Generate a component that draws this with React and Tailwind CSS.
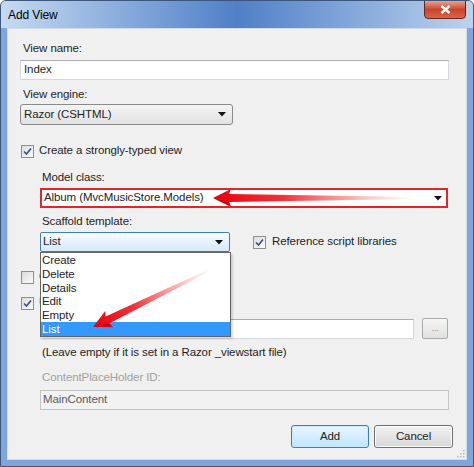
import React from "react";

const Check = ({ checked }) => (
  <span className="w-[13px] h-[13px] border border-[#8f8f8f] bg-gradient-to-br from-[#dcdcdc] to-[#fbfbfb] flex items-center justify-center shrink-0">
    {checked && (
      <svg width="9" height="9" viewBox="0 0 9 9">
        <path d="M1 4.5 L3.5 7 L8 1.5" fill="none" stroke="#3b4f83" strokeWidth="1.6" />
      </svg>
    )}
  </span>
);

const Caret = () => (
  <svg width="8" height="5" viewBox="0 0 8 5" className="shrink-0">
    <path d="M0 0 L8 0 L4 4.5 Z" fill="#111" />
  </svg>
);

const Arrow = ({ length, transform, id }) => (
  <g transform={transform}>
    <defs>
      <linearGradient id={id} x1="0" y1="0" x2="1" y2="0">
        <stop offset="0" stopColor="#e8000e" />
        <stop offset="0.35" stopColor="#ee1b24" stopOpacity="0.9" />
        <stop offset="1" stopColor="#ff5a5a" stopOpacity="0" />
      </linearGradient>
    </defs>
    <path
      d={`M0 0 L18 -9 L16 -4 L${length} -1 L${length} 1 L16 4 L18 9 Z`}
      fill={`url(#${id})`}
    />
    <path d="M2 1 L18 8 L16 4 Z" fill="#a10008" opacity="0.5" />
  </g>
);

export default function App() {
  const items = ["Create", "Delete", "Details", "Edit", "Empty", "List"];

  return (
    <div className="relative w-[474px] h-[467px] flex flex-col bg-[#7fa6dc] border border-[#3d5679] rounded-t-[6px] overflow-hidden text-[11.5px] tracking-[-0.1px] text-[#1e1e1e] font-['Liberation_Sans',Arial,sans-serif]">
      {/* title bar */}
      <div className="h-[27px] flex items-center pl-[7px] bg-linear-to-r from-[#c6daf2] via-[#4f80c6] to-[#bcd2ee]">
        <span className="text-[12px] text-black">Add View</span>
      </div>
      <div className="absolute top-[-1px] right-[7px] w-[42px] h-[19px] rounded-b-[4px] border border-[#6e2418] bg-gradient-to-b from-[#e9a08e] via-[#c8442a] to-[#d6654c] flex items-center justify-center">
        <svg width="11" height="9" viewBox="0 0 11 9">
          <path d="M1.5 1 L9.5 8 M9.5 1 L1.5 8" stroke="#fff" strokeWidth="2.4" />
        </svg>
      </div>

      {/* client area */}
      <div className="relative flex-1 mx-[6px] mb-[6px] bg-[#f0f0f0] border border-[#d2dcea] flex flex-col pl-[12px] pr-[17px] pt-[11px]">
        <div className="h-[16px] leading-[16px] pl-[3px]">View name:</div>
        <div className="mt-[4px] h-[20px] border border-[#d5d7dc] border-t-[#abadb3] bg-white flex items-center pl-[3px]">
          Index
        </div>
        <div className="mt-[6px] h-[16px] leading-[16px] pl-[3px]">View engine:</div>
        <div className="mt-[2px] w-[213px] h-[21px] rounded-[3px] border border-[#8a8a8a] bg-gradient-to-b from-[#f4f4f4] to-[#e2e2e2] flex items-center justify-between pl-[3px] pr-[6px]">
          <span>Razor (CSHTML)</span>
          <Caret />
        </div>

        <div className="mt-[18px] h-[16px] flex items-center gap-[5px] pl-[1px]">
          <Check checked />
          <span>Create a strongly-typed view</span>
        </div>

        <div className="pl-[20px] flex flex-col">
          <div className="mt-[10px] h-[16px] leading-[16px] pl-[2px]">Model class:</div>
          <div className="mt-[3px] h-[20px] border-2 border-[#e0252b] bg-white flex items-center justify-between pl-[2px] pr-[4px] mr-[1px]">
            <span>Album (MvcMusicStore.Models)</span>
            <Caret />
          </div>
          <div className="mt-[5px] h-[16px] leading-[16px] pl-[2px]">Scaffold template:</div>
          <div className="mt-[3px] flex items-center">
            <div className="relative w-[190px] h-[20px]">
              <div className="h-full rounded-[2px] border border-[#3c7fb1] bg-gradient-to-b from-[#f7fbfe] to-[#d6e9f8] flex items-center justify-between pl-[2px] pr-[6px]">
                <span>List</span>
                <Caret />
              </div>
              <div className="absolute z-10 left-0 top-[20px] w-[191px] border border-[#646464] bg-white flex flex-col shadow-[2px_2px_2px_rgba(0,0,0,0.15)]">
                {items.map((it) => (
                  <div
                    key={it}
                    className={`h-[13.8px] leading-[14px] pl-[1px] ${it === "List" ? "bg-[#3399ff] text-white" : ""}`}
                  >
                    {it}
                  </div>
                ))}
              </div>
            </div>
            <div className="ml-[23px] flex items-center gap-[6px]">
              <Check checked />
              <span>Reference script libraries</span>
            </div>
          </div>
        </div>

        <div className="mt-[17px] h-[16px] flex items-center gap-[5px] pl-[1px]">
          <Check />
          <span>Create as a partial view</span>
        </div>
        <div className="mt-[10px] h-[16px] flex items-center gap-[5px] pl-[1px]">
          <Check checked />
          <span>Use a layout or master page:</span>
        </div>

        <div className="pl-[20px] flex flex-col">
          <div className="mt-[7px] flex items-center gap-[8px] mr-[1px]">
            <div className="flex-1 h-[20px] border border-[#d5d7dc] border-t-[#abadb3] bg-white" />
            <div className="w-[26px] h-[21px] rounded-[2px] border border-[#a9a9a9] bg-gradient-to-b from-[#f6f6f6] to-[#e0e0e0] flex items-center justify-center text-[9px] text-[#8a8a8a] leading-none">
              ...
            </div>
          </div>
          <div className="mt-[5px] h-[16px] leading-[16px] pl-[2px]">
            (Leave empty if it is set in a Razor _viewstart file)
          </div>
          <div className="mt-[9px] h-[16px] leading-[16px] pl-[2px] text-[#a0a0a0]">ContentPlaceHolder ID:</div>
          <div className="mt-[5px] h-[20px] border border-[#c4c4c4] bg-[#f2f2f2] flex items-center pl-[2px] text-[#5a5a5a]">
            MainContent
          </div>
        </div>

        <div className="mt-[15px] flex justify-end gap-[5px] mr-[-4px]">
          <div className="w-[78px] h-[23px] rounded-[3px] border border-[#3c7fb1] bg-gradient-to-b from-[#eaf6fd] to-[#bee6fd] shadow-[inset_0_0_0_1px_#c9eaff] flex items-center justify-center">
            Add
          </div>
          <div className="w-[79px] h-[23px] rounded-[3px] border border-[#707070] bg-gradient-to-b from-[#f2f2f2] to-[#d8d8d8] shadow-[inset_0_0_0_1px_#fcfcfc] flex items-center justify-center">
            Cancel
          </div>
        </div>

        <svg className="absolute right-[1px] bottom-[1px]" width="10" height="10" viewBox="0 0 10 10">
          {[[8, 2], [5, 5], [8, 5], [2, 8], [5, 8], [8, 8]].map(([x, y]) => (
            <rect key={`${x}-${y}`} x={x} y={y} width="1.5" height="1.5" fill="#b8b8b8" />
          ))}
        </svg>
      </div>

      {/* annotation arrows */}
      <svg className="absolute inset-0 pointer-events-none z-20" width="474" height="467">
        <Arrow id="a1" length={200} transform="translate(212 197)" />
        <Arrow id="a2" length={130} transform="translate(92 326) rotate(-26)" />
      </svg>
    </div>
  );
}
